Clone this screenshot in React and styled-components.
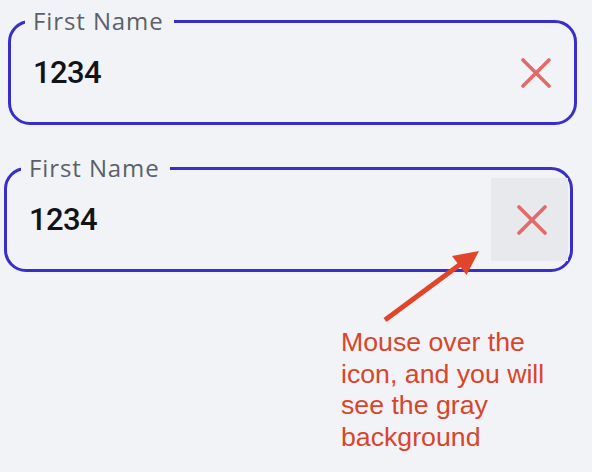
import styled, { createGlobalStyle } from "styled-components";

const GlobalStyle = createGlobalStyle`
  html, body {
    margin: 0;
    background: #f2f3f7;
  }
  body {
    font-family: "Open Sans", "Noto Sans", sans-serif;
  }
`;

const Page = styled.div`
  position: relative;
  width: 592px;
  height: 472px;
  padding: 11px 0 0 4px;
  box-sizing: border-box;
  overflow: hidden;
`;

const Field = styled.fieldset`
  width: 569px;
  box-sizing: border-box;
  min-width: 0;
  margin: ${(p) => (p.$first ? "0" : "33px")} 0 0 ${(p) => p.$indent || 0}px;
  padding: 0 2px 8px 22px;
  border: 3px solid #3a2ecb;
  border-radius: 22px;
`;

const Label = styled.legend`
  margin-left: -8px;
  padding: 0 10px 0 8px;
  font-size: 24px;
  line-height: 20px;
  font-weight: 500;
  letter-spacing: 0.9px;
  color: #5a6169;
`;

const Row = styled.div`
  display: flex;
  align-items: center;
  justify-content: space-between;
`;

const Value = styled.span`
  font-family: Roboto, "Noto Sans", sans-serif;
  font-size: 31px;
  font-weight: 500;
  letter-spacing: -0.6px;
  color: #111317;
`;

const ClearButton = styled.button`
  width: 77px;
  height: 83px;
  display: flex;
  align-items: center;
  justify-content: center;
  padding: 0 0 0 5px;
  border: none;
  background: ${(p) => (p.$hover ? "#e8e9ed" : "transparent")};
  cursor: pointer;

  &:hover {
    background: #e8e9ed;
  }
`;

const Note = styled.p`
  margin: 55px 0 0 337px;
  font-family: "Liberation Sans", Arial, sans-serif;
  font-size: 26.7px;
  line-height: 31.5px;
  color: #d9452b;
  width: 245px;
`;

const Overlay = styled.svg`
  position: absolute;
  top: 0;
  left: 0;
  pointer-events: none;
`;

const CrossIcon = () => (
  <svg width="30" height="30" viewBox="0 0 30 30">
    <path
      d="M2 2 L28 28 M28 2 L2 28"
      stroke="#e36a6a"
      strokeWidth="3.6"
      strokeLinecap="round"
      fill="none"
    />
  </svg>
);

const InputField = ({ label, value, hover, indent, first }) => (
  <Field $indent={indent} $first={first}>
    <Label>{label}</Label>
    <Row>
      <Value>{value}</Value>
      <ClearButton $hover={hover} aria-label="clear">
        <CrossIcon />
      </ClearButton>
    </Row>
  </Field>
);

export default function App() {
  return (
    <>
      <GlobalStyle />
      <Page>
        <InputField label="First Name" value="1234" indent={4} first />
        <InputField label="First Name" value="1234" hover />
        <Note>Mouse over the icon, and you will see the gray background</Note>
        <Overlay width="592" height="472" viewBox="0 0 592 472">
          <line x1="385" y1="320" x2="462" y2="263" stroke="#e0452a" strokeWidth="5" />
          <polygon points="479,251 466.5,275 452,256" fill="#e0452a" />
        </Overlay>
      </Page>
    </>
  );
}
